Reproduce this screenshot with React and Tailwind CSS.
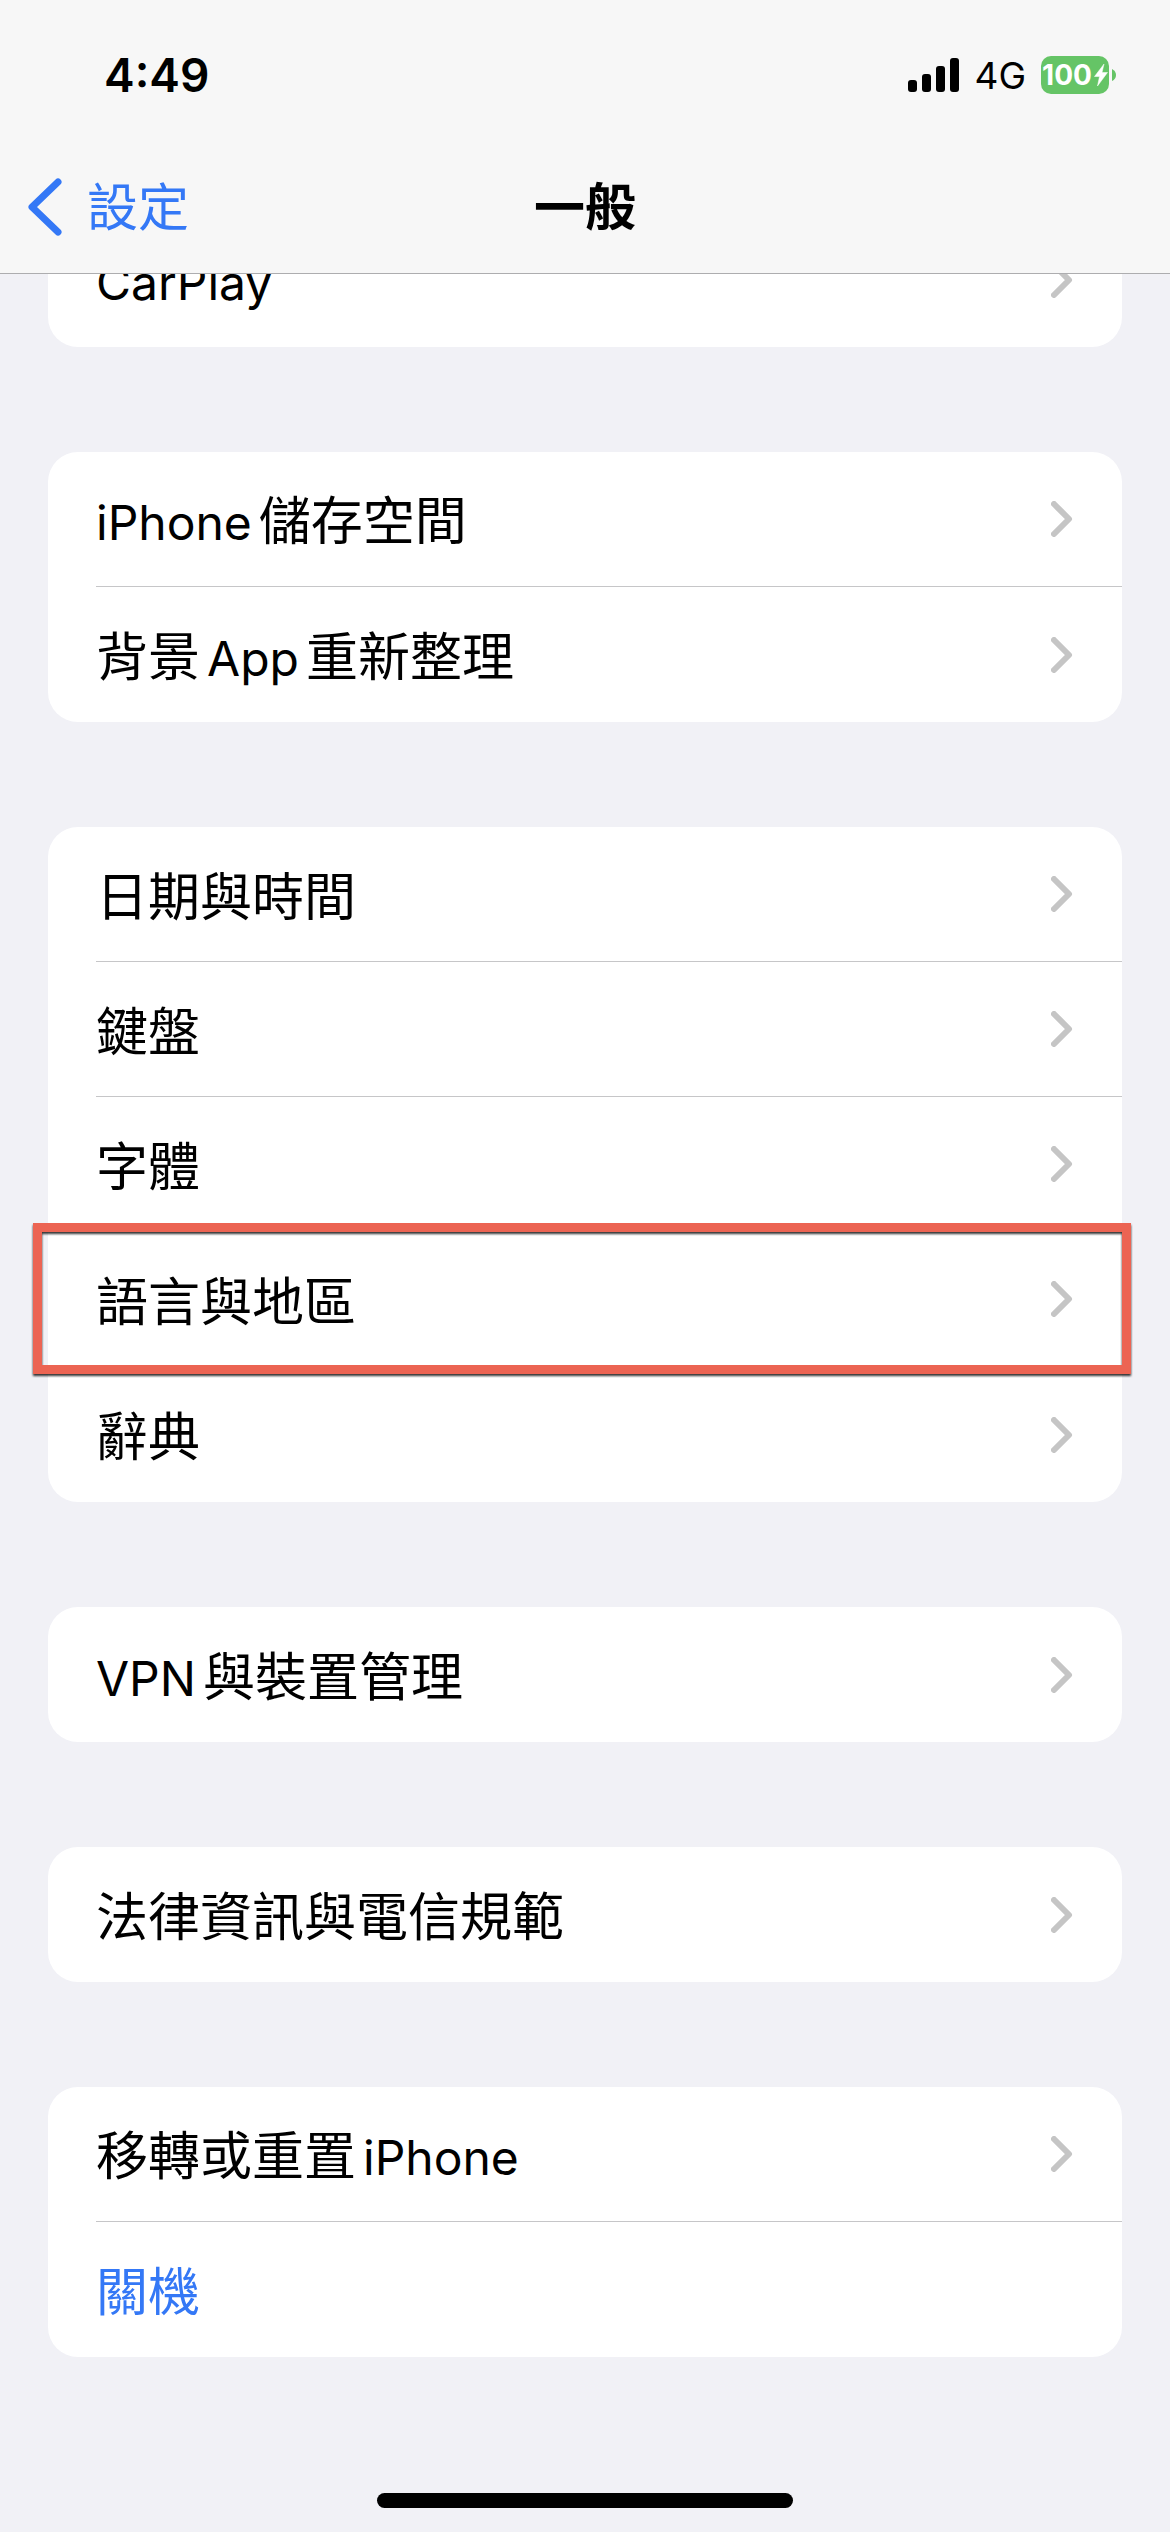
import React from "react";

const groups = [
  [{ label: "CarPlay" }],
  [{ label: "iPhone 儲存空間" }, { label: "背景 App 重新整理" }],
  [
    { label: "日期與時間" },
    { label: "鍵盤" },
    { label: "字體" },
    { label: "語言與地區", highlighted: true },
    { label: "辭典" },
  ],
  [{ label: "VPN 與裝置管理" }],
  [{ label: "法律資訊與電信規範" }],
  [{ label: "移轉或重置 iPhone" }, { label: "關機", action: true }],
];

const StatusBar = () => {
  return (
    <div className="flex h-[149px] items-center justify-between pl-[104px] pr-[54px]">
      <time className="text-[46px] font-semibold leading-[56px]">4:49</time>
      <div className="flex items-center gap-[15px]">
        <svg width="51" height="34" viewBox="0 0 51 34" aria-hidden="true">
          <rect x="0" y="22" width="9" height="12" rx="3" />
          <rect x="14" y="16" width="9" height="18" rx="3" />
          <rect x="28" y="8" width="9" height="26" rx="3" />
          <rect x="42" y="0" width="9" height="34" rx="3" />
        </svg>
        <span className="pt-[2px] text-[37px] leading-[44px]">4G</span>
        <div className="flex items-center gap-[3px]">
          <div className="flex h-[38px] w-[68px] items-center justify-center gap-[2px] rounded-[10px] bg-[#65c466] text-white">
            <span className="text-[28px] font-bold leading-[38px]">100</span>
            <svg width="14" height="24" viewBox="0 0 14 24" aria-hidden="true">
              <path
                d="M10 1 L0.5 13.5 H5.5 L3.5 23 L13.5 9.5 H8 Z"
                fill="currentColor"
                stroke="currentColor"
                strokeWidth="0.5"
                strokeLinejoin="round"
              />
            </svg>
          </div>
          <svg width="4" height="12" viewBox="0 0 4 12" aria-hidden="true">
            <path d="M0 0 Q4 2 4 6 Q4 10 0 12 Z" fill="#65c466" />
          </svg>
        </div>
      </div>
    </div>
  );
};

const NavBar = () => {
  return (
    <nav className="grid h-[124px] grid-cols-[1fr_auto_1fr] items-center px-7 pb-2 text-[51px] leading-[72px]">
      <a href="#settings" className="flex items-center gap-[25px] text-[#3478f6]">
        <svg width="34" height="58" viewBox="0 0 34 58" aria-hidden="true">
          <path
            d="M30 4 L4 29 L30 54"
            fill="none"
            stroke="currentColor"
            strokeWidth="7"
            strokeLinecap="round"
            strokeLinejoin="round"
          />
        </svg>
        <span className="pt-[2px]">設定</span>
      </a>
      <h1 className="pt-[2px] font-bold">一般</h1>
    </nav>
  );
};

const Chevron = () => {
  return (
    <svg width="22" height="36" viewBox="0 0 22 36" aria-hidden="true">
      <path
        d="M3 3 L18 18 L3 33"
        fill="none"
        stroke="#c5c5c5"
        strokeWidth="6"
        strokeLinecap="round"
        strokeLinejoin="round"
      />
    </svg>
  );
};

// Latin words are set a little smaller than the Chinese around them
const Label = ({ text }) => {
  const parts = text.split(/([A-Za-z]+)/).filter((part) => part !== "");

  return (
    <span className="flex items-baseline gap-[7px] pt-[7px]">
      {parts.map((part) => (
        <span
          key={part}
          className={/[A-Za-z]/.test(part) ? "text-[48px]" : "text-[52px]"}
        >
          {part}
        </span>
      ))}
    </span>
  );
};

const Row = ({ item, last }) => {
  const line = last ? "" : "border-b border-[#c6c6c8]";

  return (
    <li className="relative h-[135px] pl-12">
      {item.action ? (
        <button
          type="button"
          className="flex h-full w-full items-center text-left text-[#3478f6]"
        >
          <Label text={item.label} />
        </button>
      ) : (
        <a
          href="#general"
          className={`flex h-full items-center justify-between pr-[49px] ${line}`}
        >
          <Label text={item.label} />
          <Chevron />
        </a>
      )}
      {item.highlighted && (
        <div className="pointer-events-none absolute -bottom-[7px] -left-[15px] -right-[9px] -top-[9px] border-[9px] border-[#ec6453] drop-shadow-[0_2px_1px_rgba(0,0,0,0.8)]" />
      )}
    </li>
  );
};

const App = () => {
  return (
    <div className="flex min-h-screen flex-col bg-[#f1f1f6] font-['Inter','Noto_Sans_CJK_TC',sans-serif] text-black">
      <header className="sticky top-0 z-10 border-b border-[#adadaf] bg-[#f7f7f7]">
        <StatusBar />
        <NavBar />
      </header>

      {/* the list is scrolled a little way under the header */}
      <main className="-mt-[62px] flex flex-col gap-[105px] px-12 leading-[72px]">
        {groups.map((items) => (
          <ul key={items[0].label} className="rounded-[30px] bg-white">
            {items.map((item, index) => (
              <Row
                key={item.label}
                item={item}
                last={index === items.length - 1}
              />
            ))}
          </ul>
        ))}
      </main>

      <footer className="mt-auto flex justify-center pb-6">
        <div className="h-[15px] w-[416px] rounded-full bg-black" />
      </footer>
    </div>
  );
};

export default App;
